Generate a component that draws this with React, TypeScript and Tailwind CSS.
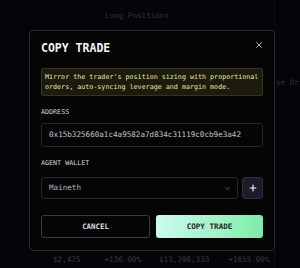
import { X, ChevronDown, Plus } from 'lucide-react'

const mono = { fontFamily: '"DejaVu Sans Mono", "Liberation Mono", monospace' }

export default function App() {
  return (
    <div className="relative w-[300px] h-[268px] overflow-hidden bg-[#0c0c16]" style={mono}>
      {/* page behind the dialog */}
      <div className="flex h-full">
        <div className="w-[275px] border-r border-[#1c1c2a] flex flex-col">
          <div className="h-[32px] flex items-center justify-center text-[7.6px] text-[#6a6a78]">
            Long Positions
          </div>
          <div className="flex-1" />
          <div className="h-[14px] mb-[1px] flex items-center text-[7.6px] text-[#7c7c88]">
            <span className="ml-[53px]">$2,475</span>
            <span className="ml-[24px]">+136.00%</span>
            <span className="ml-[18px]">$13,396,333</span>
            <span className="ml-[19px]">+1655.00%</span>
          </div>
        </div>
        <div className="flex-1 pt-[77px] pl-[1px] text-[7.6px] text-[#6a6a78] whitespace-nowrap">se Dr</div>
      </div>

      {/* overlay */}
      <div className="absolute inset-0 bg-black/55" />

      {/* dialog */}
      <div className="absolute left-[29px] top-[30px] w-[246px] rounded-[4px] border border-[#2a2a30] bg-[#050506] px-[11px] pt-[9px] pb-[12px]">
        <div className="flex items-center justify-between h-[16px]">
          <h2 className="text-[11.5px] leading-[16px] font-bold text-[#f4f4f4]">COPY TRADE</h2>
          <X className="w-[10px] h-[10px] text-[#cfcfd4] -mr-[1px] -mt-[7px]" strokeWidth={2} />
        </div>

        <div className="mt-[12px] rounded-[2px] border border-[#35351c] bg-[#1b1b0e] px-[3px] py-[3px] text-[6.7px] leading-[10px] text-[#e8e4ac]">
          Mirror the trader's position sizing with proportional orders, auto-syncing leverage and margin mode.
        </div>

        <div className="mt-[11px] text-[6.7px] leading-[10px] text-[#d4d4d8]">ADDRESS</div>
        <div className="mt-[6px] h-[24px] rounded-[3px] border border-[#26262c] flex items-center pl-[7px] text-[7.6px] text-[#c4c4c8]">
          0x15b325660a1c4a9582a7d834c31119c0cb9e3a42
        </div>

        <div className="mt-[11px] text-[6.7px] leading-[10px] text-[#d4d4d8]">AGENT WALLET</div>
        <div className="mt-[9px] flex gap-[4px]">
          <div className="flex-1 h-[22px] rounded-[3px] border border-[#26262c] flex items-center justify-between pl-[7px] pr-[6px] text-[7.6px] text-[#b4b4ba]">
            <span>Maineth</span>
            <ChevronDown className="w-[7px] h-[7px] text-[#9a9aa2]" strokeWidth={2} />
          </div>
          <button className="w-[21px] h-[22px] rounded-[3px] border border-[#2c2e3c] bg-[#1a1c2a] flex items-center justify-center">
            <Plus className="w-[10px] h-[10px] text-white" strokeWidth={2.6} />
          </button>
        </div>

        <div className="mt-[16px] flex gap-[6px]">
          <button className="flex-1 h-[23px] rounded-[3px] border border-[#3a3a40] text-[7.4px] font-semibold text-[#dadade]">
            CANCEL
          </button>
          <button className="flex-1 h-[23px] rounded-[3px] bg-gradient-to-r from-[#cbfaf0] to-[#7deca6] text-[7.6px] font-semibold text-[#1b2b24]">
            COPY TRADE
          </button>
        </div>
      </div>
    </div>
  )
}
